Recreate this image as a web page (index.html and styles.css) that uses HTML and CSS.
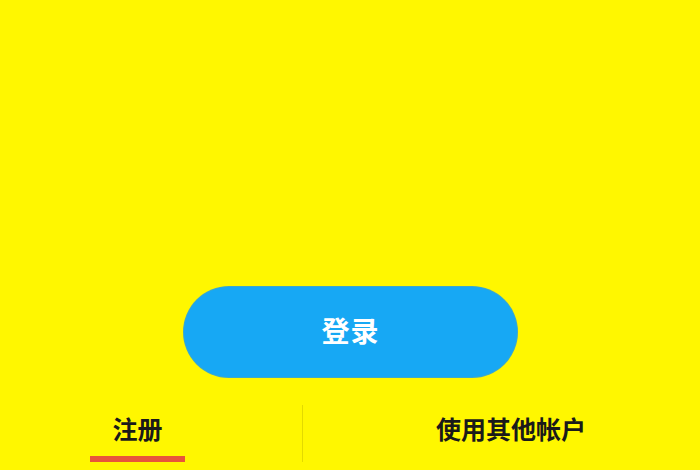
FILE: index.html
```html
<!DOCTYPE html>
<html lang="zh-CN">
<head>
<meta charset="utf-8">
<title>登录</title>
<link rel="stylesheet" href="styles.css">
</head>
<body>
<div class="page">
  <div class="actions">
    <button class="login-btn">登录</button>
  </div>
  <div class="tabs">
    <div class="tab-left">
      <div class="tab active">
        <span class="tab-label">注册</span>
        <span class="tab-underline"></span>
      </div>
    </div>
    <div class="divider"></div>
    <div class="tab-right">
      <span class="tab-label">使用其他帐户</span>
    </div>
  </div>
</div>
</body>
</html>
```

FILE: styles.css
```css
html, body {
  margin: 0;
  padding: 0;
}
body {
  background: #fff700;
  font-family: "Noto Sans CJK SC", "Noto Sans", sans-serif;
  width: 700px;
  height: 470px;
  overflow: hidden;
}
.page {
  display: flex;
  flex-direction: column;
  height: 470px;
}
.actions {
  padding-top: 287px;
  padding-left: 184px;
}
.login-btn {
  display: block;
  width: 333px;
  height: 90px;
  border: none;
  border-radius: 45px;
  background: #17a8f4;
  box-shadow: 0 0 0 1px #3fa8c8;
  color: #ffffff;
  font-family: "Noto Sans CJK SC", sans-serif;
  font-size: 28px;
  font-weight: 700;
  letter-spacing: 1px;
  padding: 0 0 4px 0;
  line-height: 1;
}
.tabs {
  display: flex;
  margin-top: 28px;
  height: 57px;
}
.tab-left {
  width: 302px;
  padding-left: 90px;
  box-sizing: border-box;
}
.tab {
  display: flex;
  flex-direction: column;
  align-items: center;
  width: 95px;
}
.tab-label {
  display: block;
  font-size: 25px;
  line-height: 25px;
  font-weight: 700;
  color: #1a1a1a;
  padding-top: 11px;
}
.tab-underline {
  display: block;
  width: 95px;
  height: 6px;
  margin-top: 15px;
  background: #e8553a;
}
.divider {
  width: 1px;
  background: #e3da00;
}
.tab-right {
  padding-left: 133px;
}
```
